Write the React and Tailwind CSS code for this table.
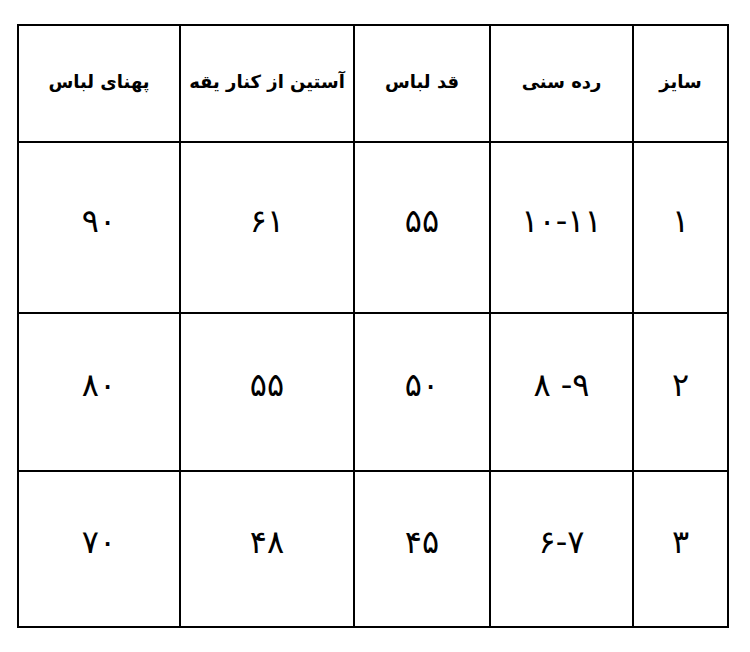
const headers = ['سایز', 'رده سنی', 'قد لباس', 'آستین از کنار یقه', 'پهنای لباس']

// values are written in visual (left-to-right) order
const rows = [
  ['۱', '۱۰-۱۱', '۵۵', '۶۱', '۹۰'],
  ['۲', '۸ -۹', '۵۰', '۵۵', '۸۰'],
  ['۳', '۶-۷', '۴۵', '۴۸', '۷۰'],
]

export default function App() {
  return (
    <div className="w-[750px] h-[652px] bg-white pt-[24px] pl-[17px]" style={{ fontFamily: '"DejaVu Sans", sans-serif' }}>
      <div
        dir="rtl"
        className="grid w-[712px] grid-cols-[93px_141px_134px_172px_160px] grid-rows-[115px_169px_156px_154px] gap-[2px] p-[2px] bg-black text-black"
      >
        {headers.map(h => (
          <div key={h} className="bg-white flex items-center justify-center pb-[4px] whitespace-nowrap text-[18px] font-semibold">
            {h}
          </div>
        ))}
        {rows.map((r, i) =>
          r.map((c, j) => (
            <div key={i + '-' + j} className="bg-white flex items-center justify-center pb-[14px] text-[32px] font-normal">
              <span dir="ltr" className="[unicode-bidi:bidi-override]">{c}</span>
            </div>
          ))
        )}
      </div>
    </div>
  )
}
